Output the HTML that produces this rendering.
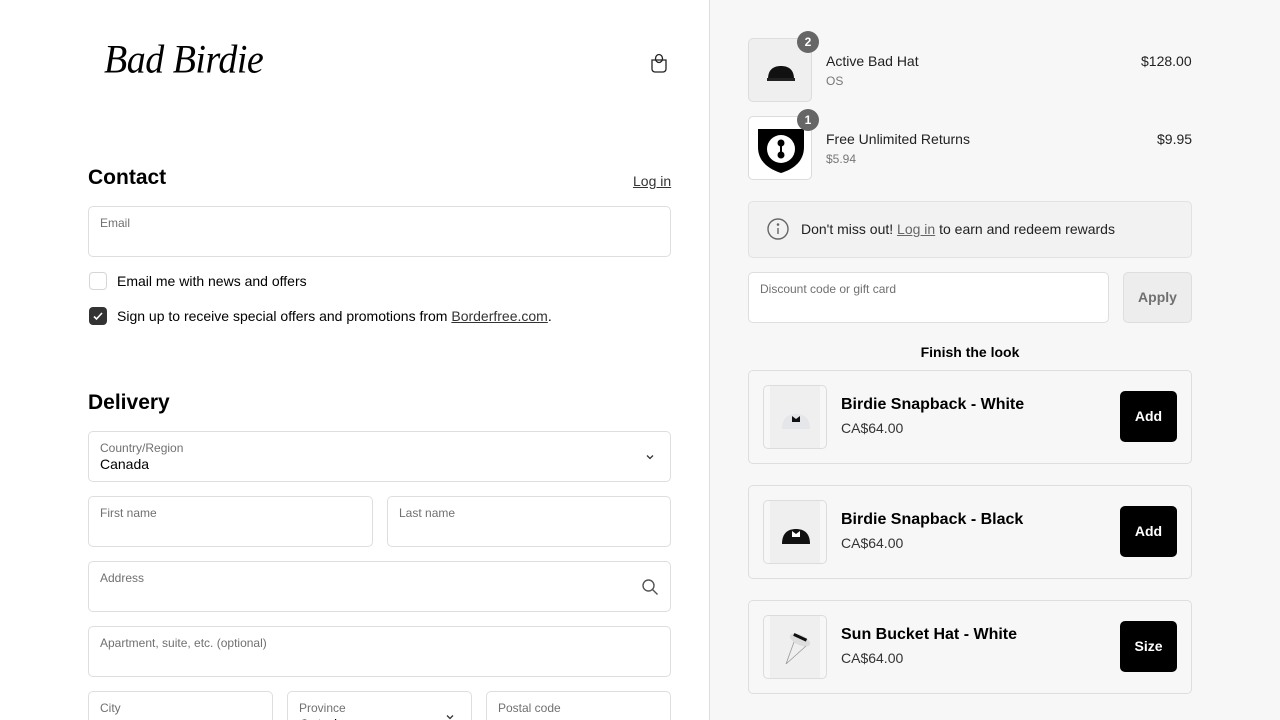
<!DOCTYPE html>
<html><head><meta charset="utf-8"><style>
*{box-sizing:border-box;margin:0;padding:0}
html{width:1280px;height:720px;overflow:hidden}
body{width:1280px;height:720px;overflow:hidden;position:relative;font-family:"Liberation Sans",sans-serif;background:#fff;color:#000}
.a{position:absolute}
.right{position:absolute;left:709px;top:0;width:571px;height:720px;background:#f7f7f7;border-left:1px solid #dedede}
.field{position:absolute;border:1px solid #dedede;border-radius:5px;background:#fff}
.lbl{position:absolute;left:11px;top:9px;font-size:12px;color:#707070}
.val{position:absolute;left:11px;top:24px;font-size:14px;color:#000}
h2{position:absolute;font-size:21px;font-weight:bold}
.thumb{position:absolute;width:64px;height:64px;border:1px solid #dcdcdc;border-radius:5px;background:#efefef}
.badge{position:absolute;width:22px;height:22px;border-radius:11px;background:#666;color:#fff;font-size:12px;font-weight:bold;text-align:center;line-height:22px}
.card{position:absolute;left:748px;width:444px;height:94px;border:1px solid #dedede;border-radius:5px}
.card .t{position:absolute;left:14px;top:14px;width:64px;height:64px;border:1px solid #dcdcdc;border-radius:5px;background:#f7f7f7;overflow:hidden}
.card .t svg{position:absolute;left:6px;top:0;background:#efefef}
.card .n{position:absolute;left:92px;top:25px;font-size:16px;font-weight:bold}
.card .p{position:absolute;left:92px;top:49px;font-size:14px;color:#333}
.card .b{position:absolute;right:14px;top:20px;width:57px;height:51px;background:#000;color:#fff;border-radius:5px;font-size:14px;font-weight:bold;text-align:center;line-height:51px}
</style></head><body>
<div class="a" style="left:104px;top:38px;font-family:'Liberation Serif',serif;font-style:italic;font-size:38px;letter-spacing:-0.5px;transform:scaleY(1.05)">Bad Birdie</div>
<svg class="a" style="left:648px;top:52px" width="22" height="22" viewBox="0 0 22 22" fill="none" stroke="#222" stroke-width="1.3"><path d="M4 8h14v9a3 3 0 0 1-3 3H7a3 3 0 0 1-3-3z"/><ellipse cx="11" cy="6.5" rx="3.5" ry="4"/></svg>

<h2 style="left:88px;top:166px">Contact</h2>
<div class="a" style="left:633px;top:173px;font-size:14px;color:#333;text-decoration:underline">Log in</div>
<div class="field" style="left:88px;top:206px;width:583px;height:51px"><div class="lbl">Email</div></div>
<div class="a" style="left:89px;top:272px;width:18px;height:18px;border:1px solid #d6d6d6;border-radius:4px"></div>
<div class="a" style="left:117px;top:273px;font-size:14px">Email me with news and offers</div>
<div class="a" style="left:89px;top:307px;width:18px;height:18px;background:#333;border-radius:4px"><svg width="18" height="18" viewBox="0 0 18 18"><path d="M5 9.5l2.5 2.5 5.5-6" stroke="#fff" stroke-width="1.6" fill="none"/></svg></div>
<div class="a" style="left:117px;top:308px;font-size:14px">Sign up to receive special offers and promotions from <span style="text-decoration:underline;color:#333">Borderfree.com</span>.</div>

<h2 style="left:88px;top:391px">Delivery</h2>
<div class="field" style="left:88px;top:431px;width:583px;height:51px"><div class="lbl">Country/Region</div><div class="val">Canada</div>
<svg class="a" style="left:556px;top:21px" width="10" height="8" viewBox="0 0 10 8"><path d="M2 2.5l3 3 3-3" stroke="#333" stroke-width="1.3" fill="none"/></svg></div>
<div class="field" style="left:88px;top:496px;width:285px;height:51px"><div class="lbl">First name</div></div>
<div class="field" style="left:387px;top:496px;width:284px;height:51px"><div class="lbl">Last name</div></div>
<div class="field" style="left:88px;top:561px;width:583px;height:51px"><div class="lbl">Address</div>
<svg class="a" style="left:552px;top:16px" width="18" height="18" viewBox="0 0 18 18" fill="none" stroke="#555" stroke-width="1.4"><circle cx="7.5" cy="7.5" r="5.5"/><path d="M11.5 11.5l5 5"/></svg></div>
<div class="field" style="left:88px;top:626px;width:583px;height:51px"><div class="lbl">Apartment, suite, etc. (optional)</div></div>
<div class="field" style="left:88px;top:691px;width:185px;height:51px"><div class="lbl">City</div></div>
<div class="field" style="left:287px;top:691px;width:185px;height:51px"><div class="lbl">Province</div><div class="val">Ontario</div>
<svg class="a" style="left:157px;top:21px" width="10" height="8" viewBox="0 0 10 8"><path d="M2 2.5l3 3 3-3" stroke="#333" stroke-width="1.3" fill="none"/></svg></div>
<div class="field" style="left:486px;top:691px;width:185px;height:51px"><div class="lbl">Postal code</div></div>

<div class="right"></div>
<div class="thumb" style="left:748px;top:38px"><svg width="64" height="64" viewBox="0 0 64 64"><path d="M19 40c0-9 5-13 13-13s13 4 13 13z" fill="#111"/><rect x="18" y="39" width="28" height="3" fill="#222"/></svg></div>
<div class="badge" style="left:797px;top:31px">2</div>
<div class="a" style="left:826px;top:53px;font-size:14px;color:#222">Active Bad Hat</div>
<div class="a" style="left:826px;top:74px;font-size:12px;color:#777">OS</div>
<div class="a" style="left:1141px;top:53px;font-size:14px;color:#222">$128.00</div>
<div class="thumb" style="left:748px;top:116px;background:#fff"><svg width="64" height="64" viewBox="0 0 64 64"><path d="M9 12h46v18c0 14-10 22-23 26C19 52 9 44 9 30z" fill="#000"/><circle cx="32" cy="32" r="14" fill="#fff"/><circle cx="32" cy="26" r="3.5" fill="#000"/><circle cx="32" cy="38" r="3.5" fill="#000"/><rect x="31" y="26" width="2" height="12" fill="#000"/></svg></div>
<div class="badge" style="left:797px;top:109px">1</div>
<div class="a" style="left:826px;top:131px;font-size:14px;color:#222">Free Unlimited Returns</div>
<div class="a" style="left:826px;top:152px;font-size:12px;color:#777">$5.94</div>
<div class="a" style="left:1157px;top:131px;font-size:14px;color:#222">$9.95</div>

<div class="a" style="left:748px;top:201px;width:444px;height:57px;border:1px solid #e2e2e2;border-radius:5px;background:#f2f2f2"></div>
<svg class="a" style="left:766px;top:217px" width="24" height="24" viewBox="0 0 24 24" fill="none" stroke="#666" stroke-width="1.4"><circle cx="12" cy="12" r="10"/><path d="M12 11v6"/><circle cx="12" cy="7.5" r=".6" fill="#666"/></svg>
<div class="a" style="left:801px;top:221px;font-size:14px;color:#222">Don't miss out! <span style="color:#666;text-decoration:underline">Log in</span> to earn and redeem rewards</div>
<div class="field" style="left:748px;top:272px;width:361px;height:51px"><div class="lbl">Discount code or gift card</div></div>
<div class="a" style="left:1123px;top:272px;width:69px;height:51px;border:1px solid #dedede;border-radius:5px;background:#ededed;color:#707070;font-size:14px;font-weight:bold;text-align:center;line-height:49px">Apply</div>
<div class="a" style="left:748px;top:344px;width:444px;text-align:center;font-size:14px;font-weight:bold">Finish the look</div>

<div class="card" style="top:370px"><div class="t"><svg width="50" height="62" viewBox="6 0 50 62"><path d="M18 43c0-11 6-15 14-15s14 4 14 15z" fill="#e4e6ea"/><path d="M28 30l4 3 4-3v6h-8z" fill="#111"/></svg></div><div class="n">Birdie Snapback - White</div><div class="p">CA$64.00</div><div class="b">Add</div></div>
<div class="card" style="top:485px"><div class="t"><svg width="50" height="62" viewBox="6 0 50 62"><path d="M18 43c0-11 6-15 14-15s14 4 14 15z" fill="#111"/><path d="M28 30l4 3 4-3v6h-8z" fill="#fff"/></svg></div><div class="n">Birdie Snapback - Black</div><div class="p">CA$64.00</div><div class="b">Add</div></div>
<div class="card" style="top:600px"><div class="t"><svg width="50" height="62" viewBox="6 0 50 62"><ellipse cx="36" cy="24" rx="11" ry="5" transform="rotate(25 36 24)" fill="#ddd"/><rect x="28" y="20" width="14" height="3" transform="rotate(25 36 24)" fill="#111"/><path d="M30 26l-8 22M42 30l-20 18" stroke="#999" stroke-width=".8"/></svg></div><div class="n">Sun Bucket Hat - White</div><div class="p">CA$64.00</div><div class="b">Size</div></div>
</body></html>
